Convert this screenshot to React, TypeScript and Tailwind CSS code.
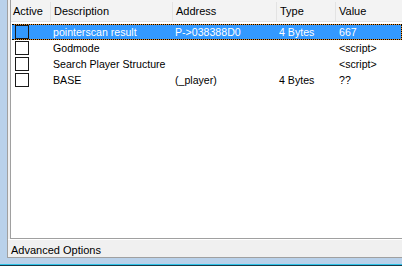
import React from "react";

const rows = [
  { desc: "pointerscan result", addr: "P->038388D0", type: "4 Bytes", value: "667", sel: true },
  { desc: "Godmode", addr: "", type: "", value: "<script>", sel: false },
  { desc: "Search Player Structure", addr: "", type: "", value: "<script>", sel: false },
  { desc: "BASE", addr: "(_player)", type: "4 Bytes", value: "??", sel: false },
];

function Row({ r }: { r: (typeof rows)[number] }) {
  const cells = (
    <div className={`flex h-full items-center ${r.sel ? "text-white" : "text-black"}`}>
      <div className="w-[39px] shrink-0 flex items-center pl-[3px]">
        <div className={`w-[14px] h-[14px] border border-[#1a1a1a] ${r.sel ? "" : "bg-white"}`} />
      </div>
      <div className="w-[122px] shrink-0 pl-[2px] whitespace-nowrap">{r.desc}</div>
      <div className="w-[104px] shrink-0 pl-[2px] whitespace-nowrap">{r.addr}</div>
      <div className="w-[59px] shrink-0 pl-[2px] whitespace-nowrap">{r.type}</div>
      <div className="flex-1 pl-[3px] whitespace-nowrap">{r.value}</div>
    </div>
  );
  if (r.sel) {
    return (
      <div className="h-[16px] ml-[1px] border border-dotted border-black bg-[#e8902a]">
        <div className="h-full bg-[#3399ff] -ml-[1px]">{cells}</div>
      </div>
    );
  }
  return <div className="h-[16px] ml-[1px]">{cells}</div>;
}

export default function App() {
  return (
    <div
      className="w-[402px] h-[266px] bg-[#b9d1ea] flex flex-col overflow-hidden text-[10.6px] leading-none"
      style={{ fontFamily: '"Liberation Sans", Arial, sans-serif' }}
    >
      <div className="flex-1 ml-[7px] border-l border-b border-[#a0a0a0] bg-[#f0f0f0] flex flex-col min-h-0">
        <div className="flex-1 ml-[2px] border-l border-b border-[#a0a0a0] bg-white flex flex-col min-h-0">
          <div className="h-[22px] flex items-center bg-[#f3f3f3] border-b border-[#e3e3e3] text-[11px] text-black shrink-0 pt-[2px]">
            <div className="w-[40px] shrink-0 pl-[2px] h-full flex items-center border-r border-[#e3e3e3]">Active</div>
            <div className="w-[122px] shrink-0 pl-[3px] h-full flex items-center border-r border-[#e3e3e3]">Description</div>
            <div className="w-[104px] shrink-0 pl-[3px] h-full flex items-center border-r border-[#e3e3e3]">Address</div>
            <div className="w-[59px] shrink-0 pl-[3px] h-full flex items-center border-r border-[#e3e3e3]">Type</div>
            <div className="flex-1 pl-[3px] h-full flex items-center">Value</div>
          </div>
          <div className="pt-[2px] flex flex-col">
            {rows.map((r, i) => (
              <Row key={i} r={r} />
            ))}
          </div>
        </div>
        <div className="h-[18px] shrink-0 flex items-center pl-[3px] pt-[3px] border-t border-white text-[11px] text-black">
          Advanced Options
        </div>
      </div>
      <div className="h-[6px] shrink-0" />
      <div className="h-px bg-[#2ec3e8] shrink-0" />
      <div className="h-px bg-[#1a3a4a] shrink-0" />
    </div>
  );
}
